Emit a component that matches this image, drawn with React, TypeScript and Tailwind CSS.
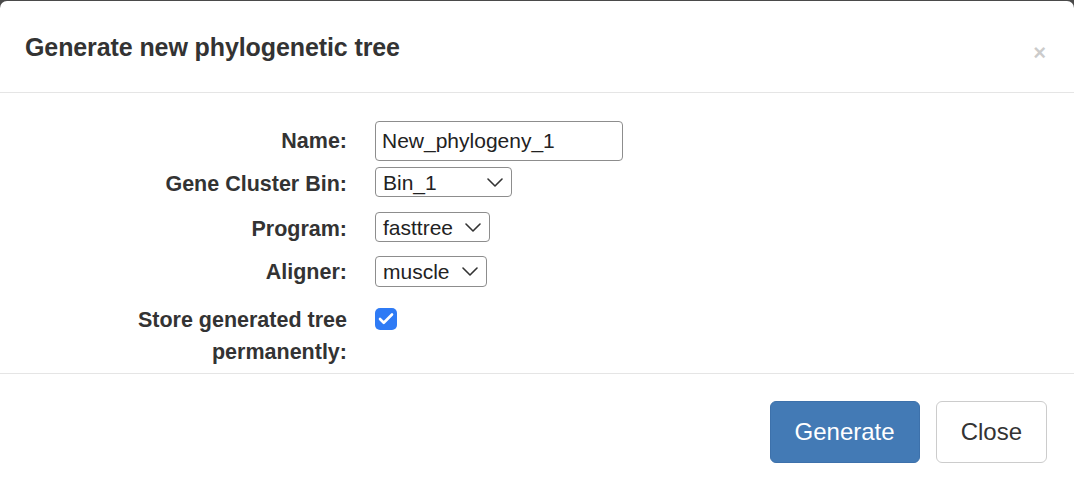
import { Check } from 'lucide-react';

const font = { fontFamily: '"Liberation Sans", Arial, sans-serif' };

function Chevron() {
  return (
    <svg width="16" height="9" viewBox="0 0 16 9" fill="none" className="shrink-0">
      <path d="M1 1l7 7 7-7" stroke="#333" strokeWidth="1.6" strokeLinecap="round" strokeLinejoin="round" />
    </svg>
  );
}

function FakeSelect({ value, width, height }: { value: string; width: string; height: string }) {
  return (
    <div
      className={`flex items-center justify-between border border-[#8d8d8d] rounded-[4px] bg-white pl-[7px] pr-[8px] text-[21px] text-[#222] ${width} ${height}`}
    >
      <span className="leading-none">{value}</span>
      <Chevron />
    </div>
  );
}

export default function App() {
  return (
    <div className="min-h-screen bg-[#4a4a4a] pt-[1px]" style={font}>
      <div className="bg-white rounded-t-[7px] h-[485px] text-[#333]">
        {/* Header */}
        <div className="h-[92px] flex items-center justify-between pl-[25px] pr-[28px] border-b border-[#e5e5e5]">
          <h4 className="text-[25px] font-semibold tracking-[-0.1px] pt-[2px]">Generate new phylogenetic tree</h4>
          <span className="text-[22px] font-bold text-black opacity-20 leading-none mt-[12px]">×</span>
        </div>

        {/* Body */}
        <div className="pt-[28px] pb-[5px] text-[21.5px]">
          <div className="grid grid-cols-[347px_1fr] gap-x-[28px]">
            <label className="font-bold text-right leading-[30px] pt-[5px]">Name:</label>
            <div className="w-[248px] h-[40px] border border-[#8d8d8d] rounded-[4px] flex items-center pl-[6px] text-[21px] text-[#222]">
              New_phylogeny_1
            </div>
          </div>

          <div className="grid grid-cols-[347px_1fr] gap-x-[28px] mt-[6px]">
            <label className="font-bold text-right leading-[30px] pt-[2px]">Gene Cluster Bin:</label>
            <FakeSelect value="Bin_1" width="w-[137px]" height="h-[30px]" />
          </div>

          <div className="grid grid-cols-[347px_1fr] gap-x-[28px] mt-[13px]">
            <label className="font-bold text-right leading-[30px] pt-[2px]">Program:</label>
            <FakeSelect value="fasttree" width="w-[115px]" height="h-[30px]" />
          </div>

          <div className="grid grid-cols-[347px_1fr] gap-x-[28px] mt-[12px]">
            <label className="font-bold text-right leading-[30px] pt-[1px]">Aligner:</label>
            <FakeSelect value="muscle" width="w-[112px]" height="h-[31px]" />
          </div>

          <div className="grid grid-cols-[347px_1fr] gap-x-[28px] mt-[17px]">
            <label className="font-bold text-right leading-[32px] pl-[100px]">
              Store generated tree permanently:
            </label>
            <div className="mt-[4px] w-[22px] h-[22px] rounded-[5px] bg-[#2f7bf5] flex items-center justify-center">
              <Check className="w-[18px] h-[18px] text-white" strokeWidth={3.5} />
            </div>
          </div>
        </div>

        {/* Footer */}
        <div className="border-t border-[#e5e5e5] flex justify-end gap-[16px] pt-[27px] pr-[27px]">
          <button className="h-[62px] px-[24px] rounded-[6px] bg-[#437ab5] border border-[#3d71ab] text-white text-[24px]">
            Generate
          </button>
          <button className="h-[62px] px-[24px] rounded-[6px] bg-white border border-[#cccccc] text-[#333] text-[24px]">
            Close
          </button>
        </div>
      </div>
    </div>
  );
}
